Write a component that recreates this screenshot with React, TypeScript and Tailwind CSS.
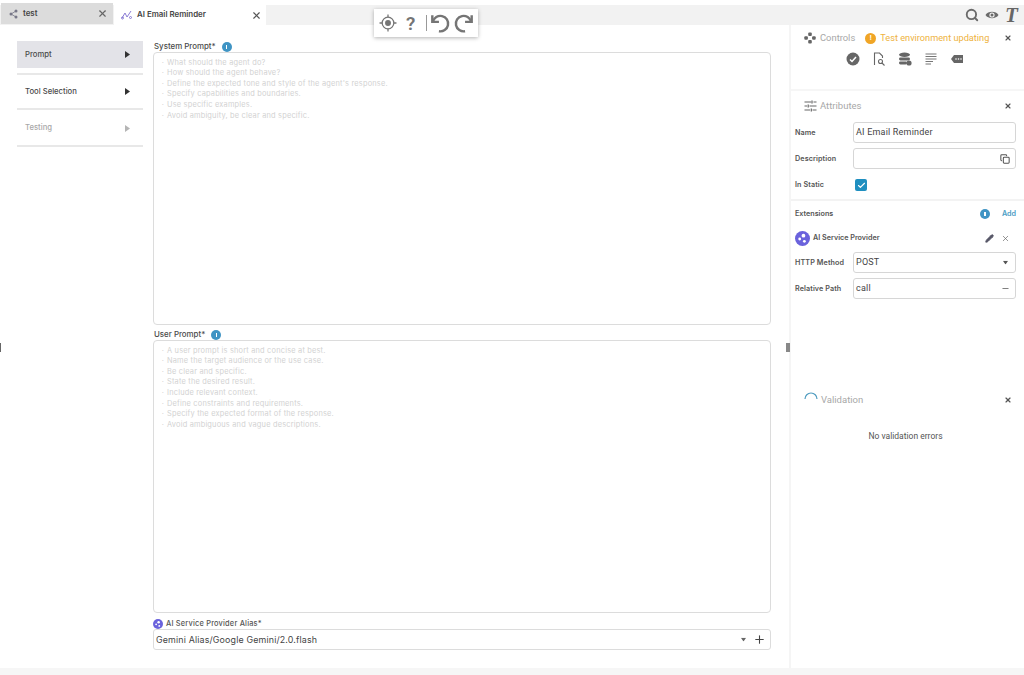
import React from 'react';
import { X, Search, Plus, Minus, Pencil, Copy, Check } from 'lucide-react';

const systemHints = [
  'What should the agent do?',
  'How should the agent behave?',
  "Define the expected tone and style of the agent's response.",
  'Specify capabilities and boundaries.',
  'Use specific examples.',
  'Avoid ambiguity, be clear and specific.',
];

const userHints = [
  'A user prompt is short and concise at best.',
  'Name the target audience or the use case.',
  'Be clear and specific.',
  'State the desired result.',
  'Include relevant context.',
  'Define constraints and requirements.',
  'Specify the expected format of the response.',
  'Avoid ambiguous and vague descriptions.',
];

function InfoDot({ size = 10 }: { size?: number }) {
  return (
    <span className="inline-flex items-center justify-center rounded-full bg-[#3f94c4]" style={{ width: size, height: size }}>
      <span className="w-[1.5px] h-[4px] bg-white" />
    </span>
  );
}

function Caret({ className }: { className: string }) {
  return (
    <svg width="5" height="7" viewBox="0 0 5 7" className={className}>
      <path d="M0 0 L5 3.5 L0 7 Z" fill="currentColor" />
    </svg>
  );
}

function SideItem({ label, active, muted }: { label: string; active?: boolean; muted?: boolean }) {
  return (
    <div className={`h-[27px] flex items-center justify-between pl-2 pr-[13px] ${active ? 'bg-[#e3e3e8]' : ''} ${muted ? 'text-[#a8a8a8] mt-px' : 'text-[#4a4a4a]'}`}>
      <span className="text-[7.7px] font-medium">{label}</span>
      <Caret className={muted ? 'text-[#b5b5b5]' : 'text-[#333333]'} />
    </div>
  );
}

function PromptBox({ label, hints }: { label: string; hints: string[] }) {
  return (
    <div className="flex flex-col">
      <div className="h-[13px] pt-[3px] flex items-center gap-[6px] text-[7.9px] font-medium text-[#4a4a4a] pl-px">
        {label} <InfoDot />
      </div>
      <div className="h-[273px] border border-[#dcdcdc] rounded-[4px] pt-[4px] pl-[6px]">
        {hints.map((h) => (
          <div key={h} className="h-[10.6px] flex items-center gap-px text-[7.4px] leading-none tracking-[0.2px] text-[#d2d2d2]">
            <span className="w-[6px] text-center">·</span>
            {h}
          </div>
        ))}
      </div>
    </div>
  );
}

function AiBadge({ size }: { size: number }) {
  return (
    <svg width={size} height={size} viewBox="0 0 16 16">
      <circle cx="8" cy="8" r="8" fill="#6a62dc" />
      <circle cx="9" cy="5" r="2" fill="#ffffff" />
      <circle cx="5" cy="8.5" r="1.5" fill="#ffffff" />
      <circle cx="10" cy="11" r="1.5" fill="#ffffff" />
    </svg>
  );
}

function PanelClose() {
  return <X size={8} strokeWidth={3.5} className="text-[#555555]" />;
}

function FieldRow({ label, children }: { label: string; children: React.ReactNode }) {
  return (
    <div className="flex items-center">
      <span className="w-[58px] pt-px text-[7.2px] font-semibold text-[#555555] tracking-[0.1px]">{label}</span>
      {children}
    </div>
  );
}

function InputBox({ value, children }: { value?: string; children?: React.ReactNode }) {
  return (
    <div className="w-[163px] h-[21px] border border-[#d6d6d6] rounded-[3px] flex items-center justify-between pl-[2px] pr-[7px] text-[9px] text-[#444444] tracking-[0.2px]" style={{ fontFamily: 'Roboto, sans-serif' }}>
      <span>{value}</span>
      {children}
    </div>
  );
}

export default function App() {
  return (
    <div className="relative w-[1024px] h-[675px] overflow-hidden bg-white flex flex-col" style={{ fontFamily: 'Inter, sans-serif' }}>
      <div className="h-[5px]" />
      {/* tab strip */}
      <div className="h-[20px] bg-[#f2f2f2] flex items-stretch pl-px">
        <div className="w-[112px] h-[21px] -mt-[2px] bg-[#dcdcdc] flex items-center pl-[8px] pr-[5px]">
          <svg width="10" height="10" viewBox="0 0 10 10" className="text-[#777788]">
            <circle cx="7" cy="2" r="1.5" fill="currentColor" />
            <circle cx="2" cy="5" r="1.5" fill="currentColor" />
            <circle cx="7" cy="8" r="1.5" fill="currentColor" />
            <path d="M7 2 L2 5 L7 8" stroke="currentColor" strokeWidth="0.8" fill="none" />
          </svg>
          <span className="ml-[4px] flex-1 text-[7.9px] font-semibold text-[#444444]">test</span>
          <X size={11} strokeWidth={2.5} className="text-[#666666]" />
        </div>
        <div className="w-[152px] bg-white ml-px flex items-center pl-[7px] pr-[4px]">
          <svg width="11" height="10" viewBox="0 0 11 10" fill="none" stroke="#7f6fd0" strokeWidth="0.9">
            <path d="M1 8 L4 3 L6 7 L10 1" />
            <circle cx="1.5" cy="8" r="1" />
            <circle cx="9.5" cy="7.5" r="1" />
          </svg>
          <span className="ml-[5px] flex-1 text-[7.9px] font-semibold text-[#444444]">AI Email Reminder</span>
          <X size={11} strokeWidth={2.5} className="text-[#555555]" />
        </div>
        <div className="flex-1" />
        <div className="flex items-center gap-[6px] pr-[5px] text-[#6a6a6a]">
          <Search size={14} strokeWidth={3.2} />
          <svg width="14" height="10" viewBox="0 0 14 10">
            <path d="M0.5 5 C3 0.8 11 0.8 13.5 5 C11 9.2 3 9.2 0.5 5 Z" fill="currentColor" />
            <circle cx="7" cy="5" r="2.6" fill="#f2f2f2" />
            <circle cx="7" cy="5" r="1.5" fill="currentColor" />
          </svg>
          <span className="text-[21px] leading-none font-bold italic text-[#666666] w-[14px]" style={{ fontFamily: '"Liberation Serif", serif' }}>T</span>
        </div>
      </div>

      {/* main area */}
      <div className="flex-1 flex min-h-0">
        {/* left rail */}
        <div className="w-[143px] pl-[17px] pt-[16px] shrink-0">
          <SideItem label="Prompt" active />
          <div className="h-[37px] border-t-2 border-b-2 border-[#e8e8e8] mt-[5px] flex flex-col justify-center">
            <SideItem label="Tool Selection" />
          </div>
          <div className="h-[37px] border-b-2 border-[#e8e8e8] flex flex-col justify-center">
            <SideItem label="Testing" muted />
          </div>
        </div>

        {/* editor */}
        <div className="w-[618px] ml-[10px] pt-[14px] shrink-0">
          <PromptBox label="System Prompt*" hints={systemHints} />
          <div className="mt-[2px]">
            <PromptBox label="User Prompt*" hints={userHints} />
          </div>
          <div className="mt-[3px] h-[13px] pt-[2px] flex items-center gap-[3px] text-[7.4px] font-medium text-[#555555] tracking-[0.2px]">
            <AiBadge size={10} />
            AI Service Provider Alias*
          </div>
          <div className="h-[21px] border border-[#dcdcdc] rounded-[3px] flex items-center justify-between pl-[2px] pr-[4px] text-[8.9px] text-[#444444] tracking-[0.15px]">
            <span>Gemini Alias/Google Gemini/2.0.flash</span>
            <span className="flex items-center gap-[7px]">
              <Caret className="text-[#666666] rotate-90 scale-75" />
              <Plus size={13} strokeWidth={2} className="text-[#444444]" />
            </span>
          </div>
        </div>

        {/* gutter */}
        <div className="w-[18px] shrink-0" />

        {/* right column */}
        <div className="w-[235px] shrink-0 border-l-2 border-[#f5f5f5] flex flex-col" style={{ fontFamily: 'Roboto, sans-serif' }}>
          <div className="h-[66px] border-b-2 border-[#f6f6f6]">
            <div className="h-[26px] flex items-center pl-[13px] pr-[12px]">
              <svg width="12" height="12" viewBox="0 0 12 12" fill="#666666">
                <rect x="4.2" y="0.5" width="3.6" height="3.6" rx="1" />
                <rect x="0.3" y="4.2" width="3.6" height="3.6" rx="1" />
                <rect x="8.1" y="4.2" width="3.6" height="3.6" rx="1" />
                <rect x="4.2" y="8" width="3.6" height="3.6" rx="1" />
              </svg>
              <span className="ml-[4px] text-[9.4px] text-[#a8a8a8]">Controls</span>
              <span className="ml-[10px] w-[11px] h-[11px] rounded-full bg-[#f0a526] text-white text-[7px] font-bold flex items-center justify-center">!</span>
              <span className="ml-[4px] flex-1 text-[9.2px] text-[#eeb23e]">Test environment updating</span>
              <PanelClose />
            </div>
            <div className="flex items-center justify-center gap-[12px] pr-[6px] pt-[1px]">
              <svg width="14" height="14" viewBox="0 0 14 14">
                <circle cx="7" cy="7" r="6.5" fill="#666666" />
                <path d="M4 7.5 L6 9.5 L10 5" stroke="#fff" strokeWidth="1.5" fill="none" />
              </svg>
              <svg width="14" height="14" viewBox="0 0 14 14" fill="none" stroke="#666666" strokeWidth="1.1">
                <path d="M2.5 13 V1 H7.5 L10.5 4 V6" />
                <circle cx="8.5" cy="9.5" r="2" />
                <path d="M10 11 L12.5 13.5" />
              </svg>
              <svg width="14" height="14" viewBox="0 0 14 14" fill="#666666">
                <ellipse cx="6.5" cy="2.7" rx="5.5" ry="2.2" />
                <rect x="1" y="5.5" width="11" height="3" rx="1.4" />
                <rect x="1" y="9.5" width="8" height="3" rx="1.4" />
                <circle cx="11" cy="11" r="2.6" />
              </svg>
              <svg width="14" height="14" viewBox="0 0 14 14" stroke="#777777" strokeWidth="1" fill="none">
                <path d="M1.5 2 H12.5 M1.5 4.5 H12.5 M1.5 7 H12.5 M1.5 9.5 H9 M1.5 12 H7" />
              </svg>
              <svg width="14" height="14" viewBox="0 0 14 14">
                <path d="M4 3 H13 V11 H4 L1 7 Z" fill="#666666" />
                <circle cx="6" cy="7" r="0.8" fill="#fff" />
                <circle cx="8.5" cy="7" r="0.8" fill="#fff" />
                <circle cx="11" cy="7" r="0.8" fill="#fff" />
              </svg>
            </div>
          </div>

          <div className="h-[26px] mt-[2px] flex items-center pl-[13px] pr-[12px]">
            <svg width="13" height="12" viewBox="0 0 13 12" stroke="#666666" strokeWidth="1.2" fill="none">
              <path d="M0.5 2 H7 M9.5 2 H12.5 M0.5 6 H3 M5.5 6 H12.5 M0.5 10 H6 M8.5 10 H12.5 M8 0.5 V3.5 M4.2 4.5 V7.5 M7.3 8.5 V11.5" />
            </svg>
            <span className="ml-[3px] flex-1 text-[9.5px] text-[#a8a8a8]">Attributes</span>
            <PanelClose />
          </div>

          <div className="flex flex-col gap-[5px] pl-[4px] pr-[6px] pt-[3px]" style={{ fontFamily: 'Inter, sans-serif' }}>
            <FieldRow label="Name"><InputBox value="AI Email Reminder" /></FieldRow>
            <FieldRow label="Description">
              <InputBox><Copy size={10} strokeWidth={2.5} className="text-[#555555] -mr-[2px]" /></InputBox>
            </FieldRow>
            <div className="h-[22px] flex items-center">
              <FieldRow label="In Static">
                <span className="ml-[2px] w-[12px] h-[12px] rounded-[2px] bg-[#1f8fc0] flex items-center justify-center">
                  <Check size={9} strokeWidth={3} className="text-white" />
                </span>
              </FieldRow>
            </div>
          </div>

          <div className="mt-[3px] border-t-2 border-[#f3f3f3] pl-[4px] pr-[6px]" style={{ fontFamily: 'Inter, sans-serif' }}>
            <div className="h-[26px] flex items-center text-[7.2px] font-semibold text-[#555555]">
              <span className="flex-1">Extensions</span>
              <InfoDot size={10} />
              <span className="ml-[12px] mr-[2px] text-[#4a9cc4]">Add</span>
            </div>
            <div className="h-[23px] flex items-center text-[7.2px] font-semibold text-[#555555]">
              <AiBadge size={15} />
              <span className="ml-[3px] flex-1">AI Service Provider</span>
              <Pencil size={9} strokeWidth={2.5} fill="#555566" className="text-[#555566]" />
              <X size={9} strokeWidth={1.8} className="ml-[7px] mr-[8px] text-[#666666]" />
            </div>
            <div className="flex flex-col gap-[5px] mt-[2px]">
              <FieldRow label="HTTP Method">
                <InputBox value="POST"><Caret className="text-[#555555] rotate-90 scale-75" /></InputBox>
              </FieldRow>
              <FieldRow label="Relative Path">
                <InputBox value="call"><Minus size={9} strokeWidth={2} className="text-[#555555] -mr-[2px]" /></InputBox>
              </FieldRow>
            </div>
          </div>

          <div className="mt-[88px] h-[26px] flex items-center pl-[13px] pr-[12px]">
            <svg width="14" height="14" viewBox="0 0 14 14" fill="none" stroke="#4f9cc0" strokeWidth="1.2" className="-mt-[5px]">
              <path d="M1 8 A6 6 0 0 1 13 8" />
            </svg>
            <span className="ml-[3px] flex-1 text-[9.5px] text-[#a8a8a8]">Validation</span>
            <PanelClose />
          </div>
          <div className="mt-[17px] text-center text-[8.5px] text-[#555555] pr-[4px]">No validation errors</div>
        </div>
      </div>
      <div className="h-[7px] bg-[#f6f6f6]" />

      {/* floating toolbar */}
      <div className="absolute left-[374px] top-[9px] w-[104px] h-[28px] bg-white shadow-[0_1px_4px_rgba(0,0,0,0.3)] flex items-center pl-[5px] text-[#757575]">
        <svg width="18" height="18" viewBox="0 0 17 17" fill="none" stroke="currentColor" strokeWidth="1.2">
          <circle cx="8.5" cy="8.5" r="5.5" />
          <circle cx="8.5" cy="8.5" r="2.8" fill="currentColor" stroke="none" />
          <path d="M8.5 0.5 V3 M8.5 14 V16.5 M0.5 8.5 H3 M14 8.5 H16.5" />
        </svg>
        <span className="ml-[9px] text-[19px] leading-none font-semibold" style={{ fontFamily: 'Roboto, sans-serif' }}>?</span>
        <span className="ml-[11px] w-px h-[16px] bg-[#999999]" />
        <svg width="21" height="21" viewBox="0 0 19 19" fill="none" stroke="currentColor" strokeWidth="2.2" className="ml-[2px]">
          <path d="M3 2 V8 H9" />
          <path d="M3.5 8 A7 7 0 1 1 9 16.5" />
        </svg>
        <svg width="21" height="21" viewBox="0 0 19 19" fill="none" stroke="currentColor" strokeWidth="2.2" className="ml-[4px]">
          <path d="M16 2 V8 H10" />
          <path d="M15.5 8 A7 7 0 1 0 10 16.5" />
        </svg>
      </div>

      {/* splitter handles */}
      <span className="absolute left-0 top-[343px] w-px h-[9px] bg-[#666666]" />
      <span className="absolute left-[786px] top-[343px] w-[4px] h-[9px] bg-[#888888]" />
    </div>
  );
}
